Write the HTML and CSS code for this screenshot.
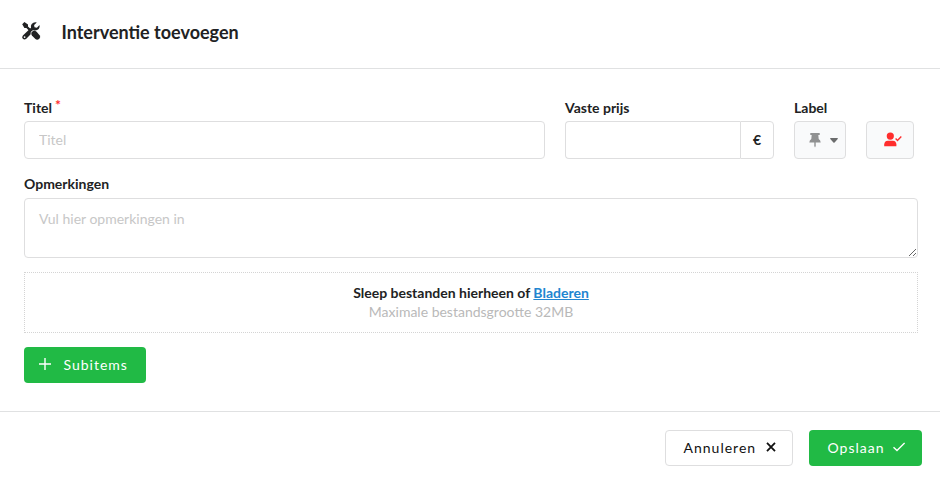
FILE: index.html
```
<!DOCTYPE html>
<html lang="nl">
<head>
  <meta charset="UTF-8" />
  <meta name="viewport" content="width=device-width, initial-scale=1" />
  <title>Interventie toevoegen</title>
  <link rel="stylesheet" href="styles.css">
</head>
<body>

  <form class="modal">
    <div class="header">
      <svg class="tools-icon" viewBox="0 0 20 20" width="20" height="20">
        <path class="shape" d="M1.2 3.2 3.4 1 7 3.4V5.4L10.2 8.6 8.6 10.2 5.4 7H3.4Z" />
        <path class="shape" d="M10.4 11.6 12 10Q14 9 15.6 10.8L18.6 14.2Q20 16 18.3 17.8 16.2 19.6 14.4 18L10.9 14.6Q10 13.4 10.4 11.6Z" />
        <path class="shape" d="M18.5 4.1 15.9 6.7 13.5 6.3 13.1 4 15.8 1.4Q12.7.6 10.7 2.9 9.5 4.6 10 6.7L1.9 14.5Q.4 16.3 1.8 17.8 3.5 19.3 5.3 17.8L9.7 13.3Q9.2 11.4 10.5 10.3 11.6 9 13.2 9.5 16 9.9 17.7 8.1 19.2 6.3 18.5 4.1Z" />
        <circle class="hole" cx="3.6" cy="16.1" r=".9" />
      </svg>
      <h1>Interventie toevoegen</h1>
    </div>

    <div class="content">
      <div class="fields">
        <div class="field field-title">
          <label for="titel">Titel<span class="required">*</span></label>
          <input type="text" id="titel" placeholder="Titel" />
        </div>
        <div class="field field-price">
          <label for="prijs">Vaste prijs</label>
          <div class="labeled-input">
            <input type="text" id="prijs" />
            <div class="unit">€</div>
          </div>
        </div>
        <div class="field field-label">
          <label>Label</label>
          <button type="button" class="picker">
            <svg class="pin-icon" viewBox="0 0 12 16" width="12" height="16">
              <path d="M1.3 1H10.7V3H9.3L9.7 7Q11.6 8.3 11.7 10.4H.3Q.4 8.3 2.3 7L2.7 3H1.3ZM5.3 10.4H6.7V14L6 15.4 5.3 14Z" />
            </svg>
            <svg class="caret-icon" viewBox="0 0 8 5" width="8" height="5">
              <path d="M.6 0H7.4Q8.2.2 7.7 1L4.6 4.5Q4 5 3.4 4.5L.3 1Q-.2.2.6 0Z" />
            </svg>
          </button>
        </div>
        <div class="field field-user">
          <button type="button" class="user-button">
            <svg class="user-icon" viewBox="0 0 18 15" width="18" height="15">
              <circle cx="6.3" cy="4.1" r="3.6" />
              <path d="M.2 14.2V12.4Q.4 8.9 3.8 8.7H8.9Q12.2 8.9 12.4 12.4V14.2Z" />
              <path class="tick" d="M11.6 6.6 13.5 8.4 17.3 4.6" />
            </svg>
          </button>
        </div>
      </div>

      <div class="field field-remarks">
        <label for="opmerkingen">Opmerkingen</label>
        <textarea id="opmerkingen" placeholder="Vul hier opmerkingen in"></textarea>
      </div>

      <div class="dropzone">
        <div class="drop-text">Sleep bestanden hierheen of <a href="#">Bladeren</a></div>
        <div class="drop-hint">Maximale bestandsgrootte 32MB</div>
      </div>

      <button type="button" class="button green subitems">
        <svg class="line-icon" viewBox="0 0 12 12" width="12" height="12"><path d="M6 0V12M0 6H12" /></svg>
        <span>Subitems</span>
      </button>
    </div>

    <div class="actions">
      <button type="button" class="button cancel">
        <span>Annuleren</span>
        <svg class="line-icon thick" viewBox="0 0 10 10" width="10" height="10"><path d="M1 .8 9 9.2M9 .8 1 9.2" /></svg>
      </button>
      <button type="button" class="button green save">
        <span>Opslaan</span>
        <svg class="line-icon" viewBox="0 0 12 10" width="12" height="10"><path d="M.5 5.2 4 8.6 11.6 .9" /></svg>
      </button>
    </div>
  </form>

</body>
</html>
```
FILE: styles.css
```
* { box-sizing: border-box; margin: 0; padding: 0; font-family: Lato, sans-serif; }

body {
  background: #fff;
  color: #212223;
  font-size: 14px;
}

.header {
  display: flex;
  align-items: center;
  height: 69px;
  padding: 0 22px 6px 21px;
  border-bottom: 1px solid #e0e1e2;
}

.tools-icon .shape {
  fill: #212223;
}

.tools-icon .hole {
  fill: #fff;
}

h1 {
  margin-left: 20.5px;
  padding-top: 2px;
  font-size: 18px;
  font-weight: 700;
}

.content {
  height: 342px;
  padding: 29px 22px 0 24px;
}

.fields {
  display: flex;
  align-items: flex-end;
  margin-bottom: 15px;
}

.field label {
  display: block;
  height: 19px;
  margin-bottom: 4px;
  font-size: 14px;
  line-height: 19px;
  font-weight: 700;
}

.required {
  margin-left: 3px;
  color: #ff2d2d;
  position: relative;
  top: -3px;
}

.field-title { width: 521px; margin-right: 20px; }
.field-price { width: 209px; margin-right: 20px; }
.field-label { width: 52px; margin-right: 20px; }
.field-user { width: 48px; }

input, textarea {
  display: block;
  width: 100%;
  border: 1px solid #dededf;
  border-radius: 4px;
  padding: 0 14px;
  font-size: 14px;
  background: #fff;
  outline: none;
}

input {
  height: 38px;
  padding-bottom: 2px;
}

textarea {
  height: 60px;
  padding-top: 11px;
  line-height: 18px;
  resize: vertical;
}

::placeholder {
  color: #c7c7c7;
}

.labeled-input {
  display: flex;
}

.labeled-input input {
  flex: 1;
  min-width: 0;
  border-right: none;
  border-radius: 4px 0 0 4px;
}

.unit {
  width: 34px;
  border: 1px solid #dededf;
  border-radius: 0 4px 4px 0;
  line-height: 36px;
  text-align: center;
  font-weight: 700;
}

.picker, .user-button {
  display: flex;
  align-items: center;
  width: 100%;
  height: 38px;
  border: 1px solid #dededf;
  border-radius: 4px;
  background: #f9fafb;
  cursor: pointer;
}

.picker {
  padding-left: 14px;
  gap: 9px;
}

.pin-icon { fill: #909192; }
.caret-icon { fill: #6b6c6d; }

.user-button {
  padding: 0 0 1px 17px;
}

.user-icon {
  fill: #ff2d2d;
}

.user-icon .tick {
  fill: none;
  stroke: #ff2d2d;
  stroke-width: 1.4;
}

.field-remarks {
  margin-bottom: 14px;
}

.field-remarks label {
  margin-bottom: 5px;
}

.dropzone {
  height: 61px;
  margin-bottom: 14px;
  padding-top: 10px;
  border: 1px dotted #d4d4d4;
  text-align: center;
}

.drop-text {
  font-weight: 700;
  line-height: 19px;
}

.drop-text a {
  color: #2185d0;
}

.drop-hint {
  color: #b9b9b9;
  line-height: 20px;
}

.button {
  display: flex;
  align-items: center;
  height: 36px;
  padding-bottom: 2px;
  border: none;
  border-radius: 4px;
  font-size: 14px;
  letter-spacing: 1px;
  cursor: pointer;
}

.green {
  background: #21ba45;
  color: #fff;
}

.line-icon {
  fill: none;
  stroke: currentColor;
  stroke-width: 1.4;
}

.line-icon.thick {
  stroke-width: 1.8;
}

.subitems {
  width: 122px;
  padding-left: 15px;
  gap: 12.5px;
}

.actions {
  display: flex;
  justify-content: flex-end;
  gap: 16px;
  height: 66px;
  padding: 18px 18px 0;
  border-top: 1px solid #e0e1e2;
}

.cancel {
  width: 128px;
  padding-left: 17.5px;
  gap: 9.5px;
  border: 1px solid #dededf;
  background: #fff;
  color: #111;
}

.save {
  width: 113px;
  padding-left: 18.5px;
  gap: 8.5px;
}
```
